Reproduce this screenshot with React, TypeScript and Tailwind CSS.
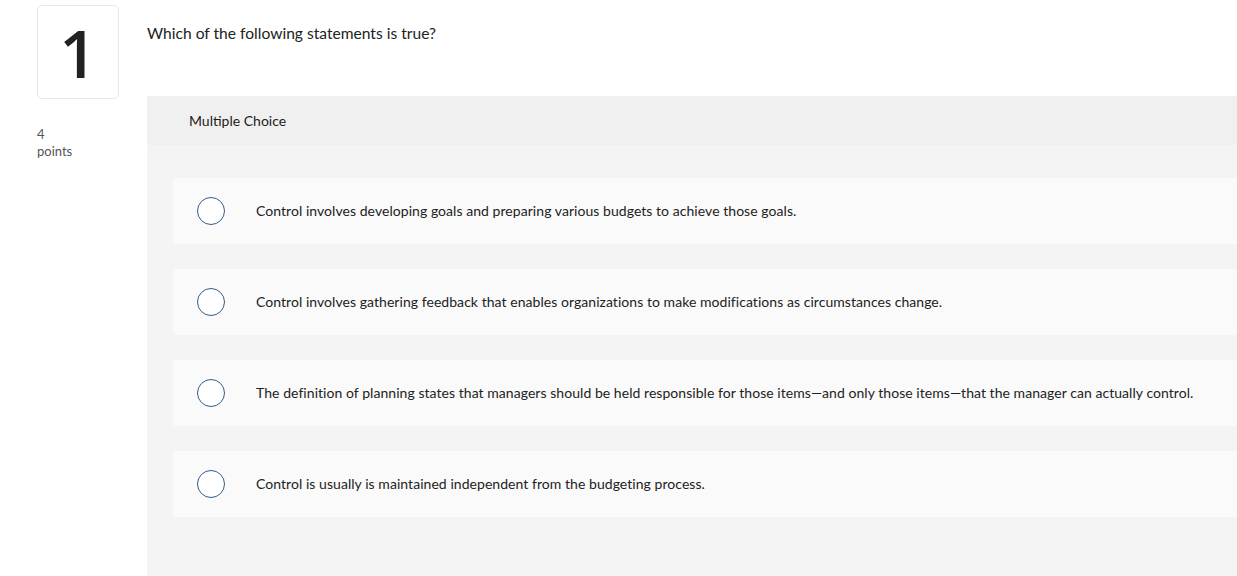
const options = [
  'Control involves developing goals and preparing various budgets to achieve those goals.',
  'Control involves gathering feedback that enables organizations to make modifications as circumstances change.',
  'The definition of planning states that managers should be held responsible for those items\u2014and only those items\u2014that the manager can actually control.',
  'Control is usually is maintained independent from the budgeting process.',
]

export default function App() {
  return (
    <div className="flex min-h-[576px] w-[1237px] overflow-hidden bg-white font-['Lato',sans-serif] text-[#222]">
      {/* Left column */}
      <div className="w-[147px] shrink-0 pl-[37px] pt-[5px]">
        <div className="flex h-[94px] w-[82px] items-center justify-center rounded-[5px] border border-[#e8e8e8]">
          <span className="font-['Open_Sans',sans-serif] text-[66px] font-semibold leading-none text-[#222]">1</span>
        </div>
        <div className="mt-[27px] text-[13px] leading-[17px] text-[#555]">
          <div>4</div>
          <div>points</div>
        </div>
      </div>

      {/* Main */}
      <div className="flex flex-1 flex-col">
        <div className="h-[96px] pt-[23px] text-[15.6px] leading-[20px]">Which of the following statements is true?</div>
        <div className="flex flex-1 flex-col bg-[#f4f4f4]">
          <div className="flex h-[49px] items-center bg-[#f0f0f0] pl-[42px] text-[14px]">Multiple Choice</div>
          <div className="flex flex-col gap-[25px] pb-[60px] pl-[26px] pt-[33px]">
            {options.map((text) => (
              <div key={text} className="flex h-[66px] items-center rounded-l-[3px] bg-[#fafafa] pl-[24px]">
                <span className="h-[28px] w-[28px] shrink-0 rounded-full border-[1.5px] border-[#2f5d8c] bg-white" />
                <span className="ml-[31px] pb-[2px] text-[14px] tracking-[0.05px]">{text}</span>
              </div>
            ))}
          </div>
        </div>
      </div>
    </div>
  )
}
